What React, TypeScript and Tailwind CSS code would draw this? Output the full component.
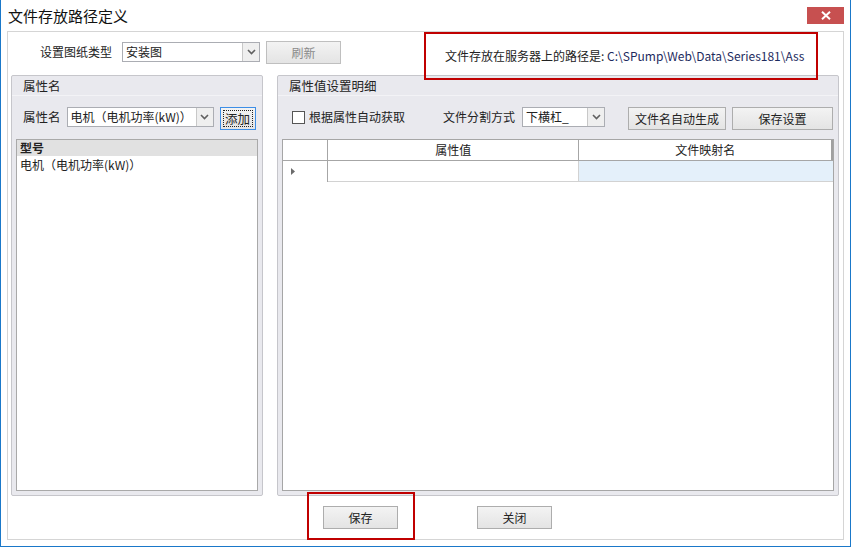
import React from "react";

const Chevron = () => (
  <svg width="9" height="6" viewBox="0 0 9 6">
    <path d="M1 1 L4.5 4.5 L8 1" fill="none" stroke="#606060" strokeWidth="1.6" />
  </svg>
);

const Combo = ({ text, w }: { text: string; w: string }) => (
  <div className={`${w} h-[20px] bg-white border border-[#abadb3] flex shrink-0`}>
    <div className="flex-1 pl-[3px] leading-[18px] whitespace-nowrap overflow-hidden">{text}</div>
    <div className="w-[17px] border-l border-[#c8c8c8] bg-[#efefef] flex items-center justify-center">
      <Chevron />
    </div>
  </div>
);

const Btn = ({
  label,
  w,
  disabled,
  focused,
}: {
  label: string;
  w: string;
  disabled?: boolean;
  focused?: boolean;
}) => (
  <div
    className={`${w} h-[23px] shrink-0 border bg-linear-to-b from-[#f3f3f3] to-[#e4e4e4] flex items-center justify-center whitespace-nowrap ${
      focused ? "border-[#3d8ee6] p-[2px]" : disabled ? "border-[#bfbfbf]" : "border-[#adadad]"
    } ${disabled ? "text-[#8a8a8a]" : "text-[#222]"}`}
  >
    {focused ? (
      <div className="w-full h-full border border-dotted border-[#222] flex items-center justify-center text-[12.5px] leading-[16px]">
        {label}
      </div>
    ) : (
      <span className="leading-[16px]">{label}</span>
    )}
  </div>
);

const PanelHeader = ({ title }: { title: string }) => (
  <div className="h-[20px] pl-[11px] leading-[20px] text-[12.5px] border-b border-[#f3f3f6] shrink-0">{title}</div>
);

export default function App() {
  return (
    <div className="relative w-[851px] h-[547px] bg-white border-x border-b border-[#1a78c9] flex flex-col text-[12px] text-[#222] font-['Noto_Sans_CJK_SC','Noto_Sans',sans-serif]">
      {/* title bar */}
      <div className="h-[31px] flex items-start shrink-0">
        <span className="pl-[7px] pt-[6px] text-[15px] leading-[20px] text-[#111]">文件存放路径定义</span>
        <div className="ml-auto mt-[7px] mr-[6px] w-[37px] h-[17px] bg-[#c75050] flex items-center justify-center">
          <svg width="10" height="9" viewBox="0 0 10 9">
            <path d="M1 0.8 L9 8.2 M9 0.8 L1 8.2" stroke="white" strokeWidth="2" />
          </svg>
        </div>
      </div>

      {/* content */}
      <div className="flex-1 mx-[6px] mb-[6px] border border-[#d5d5d5] flex flex-col">
        <div className="h-[43px] flex items-start shrink-0 whitespace-nowrap">
          <span className="ml-[32px] mt-[10px] leading-[20px]">设置图纸类型</span>
          <div className="ml-[10px] mt-[10px]">
            <Combo text="安装图" w="w-[138px]" />
          </div>
          <div className="ml-[6px] mt-[9px]">
            <Btn label="刷新" w="w-[75px]" disabled />
          </div>
          <span className="ml-[104px] mt-[16px] leading-[16px]">
            文件存放在服务器上的路径是: <span className="text-[#1d2b5e]">C:\SPump\Web\Data\Series181\Ass</span>
          </span>
        </div>

        <div className="h-[421px] flex shrink-0 pl-[3px]">
          {/* left panel */}
          <div className="w-[252px] shrink-0 border border-[#c6c6cb] rounded-[2px] bg-[#e9e9ee] flex flex-col">
            <PanelHeader title="属性名" />
            <div className="flex items-start mt-[11px] pl-[11px] shrink-0 whitespace-nowrap">
              <span className="leading-[20px] text-[12.5px]">属性名</span>
              <div className="ml-[6px]">
                <Combo text="电机（电机功率(kW)）" w="w-[147px]" />
              </div>
              <div className="ml-[6px]">
                <Btn label="添加" w="w-[36px]" focused />
              </div>
            </div>
            <div className="flex-1 mx-[4px] mt-[9px] mb-[4px] bg-white border border-[#a9a9a9] flex flex-col">
              <div className="h-[16px] bg-[#e1e1e1] pl-[3px] leading-[16px] font-bold text-[12px]">型号</div>
              <div className="h-[18px] pl-[3px] leading-[18px]">电机（电机功率(kW)）</div>
            </div>
          </div>

          {/* right panel */}
          <div className="ml-[14px] w-[562px] shrink-0 border border-[#c6c6cb] rounded-[2px] bg-[#e9e9ee] flex flex-col">
            <PanelHeader title="属性值设置明细" />
            <div className="flex items-start mt-[11px] pl-[14px] shrink-0 whitespace-nowrap">
              <div className="mt-[4px] w-[13px] h-[13px] shrink-0 border border-[#555] bg-white" />
              <span className="ml-[4px] leading-[20px] text-[12px]">根据属性自动获取</span>
              <span className="ml-[38px] leading-[20px]">文件分割方式</span>
              <div className="ml-[7px]">
                <Combo text="下横杠_" w="w-[83px]" />
              </div>
              <div className="ml-[23px]">
                <Btn label="文件名自动生成" w="w-[98px]" />
              </div>
              <div className="ml-[6px]">
                <Btn label="保存设置" w="w-[101px]" />
              </div>
            </div>
            <div className="flex-1 ml-[4px] mr-[4px] mt-[9px] mb-[4px] bg-white border border-[#a6a6a6] flex flex-col">
              <div className="h-[21px] flex border-b border-[#a6a6a6]">
                <div className="w-[45px] border-r border-[#a6a6a6]" />
                <div className="w-[252px] border-r border-[#a6a6a6] flex items-center justify-center leading-[16px]">属性值</div>
                <div className="w-[254px] border-r-2 border-[#a0a0a0] flex items-center justify-center leading-[16px]">文件映射名</div>
              </div>
              <div className="h-[21px] flex">
                <div className="w-[45px] border-r border-[#a6a6a6] flex items-center pl-[8px]">
                  <svg width="4" height="7" viewBox="0 0 4 7">
                    <path d="M0 0 L4 3.5 L0 7 Z" fill="#6b6b6b" />
                  </svg>
                </div>
                <div className="w-[252px] border-r border-b border-[#d2d2d2]" />
                <div className="w-[254px] bg-[#e4f0fa] border-b border-[#d2d2d2]" />
              </div>
            </div>
          </div>
        </div>

        <div className="flex items-start pt-[10px]">
          <div className="ml-[315px]">
            <Btn label="保存" w="w-[75px]" />
          </div>
          <div className="ml-[79px]">
            <Btn label="关闭" w="w-[75px]" />
          </div>
        </div>
      </div>

      {/* annotation boxes */}
      <div className="absolute left-[423px] top-[32px] w-[394px] h-[48px] border-2 border-[#c00000]" />
      <div className="absolute left-[306px] top-[492px] w-[108px] h-[48px] border-2 border-[#c00000]" />
    </div>
  );
}
